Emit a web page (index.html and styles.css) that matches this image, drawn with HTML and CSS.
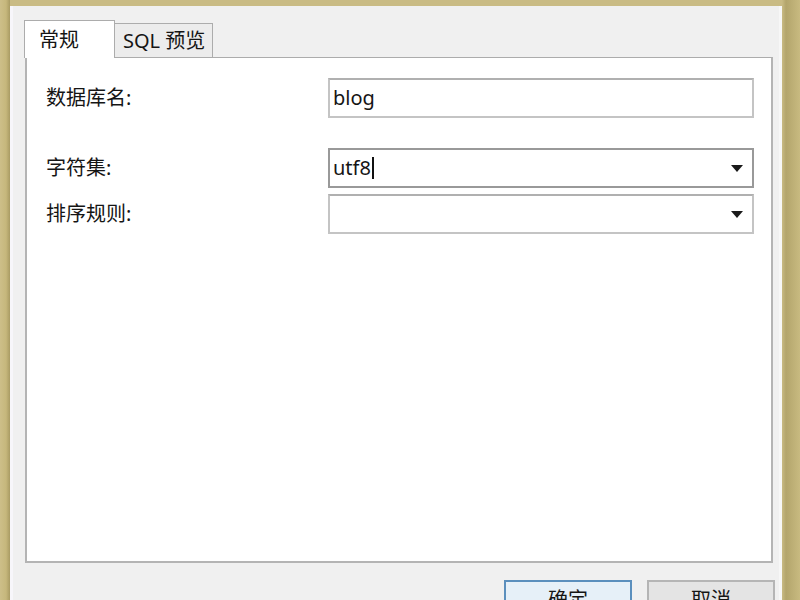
FILE: index.html
```html
<!DOCTYPE html>
<html lang="zh-CN">
<head>
<meta charset="utf-8">
<title>新建数据库</title>
<link rel="stylesheet" href="styles.css">
</head>
<body>
<div class="frame">
  <div class="dialog">
    <div class="tabs">
      <div class="tab tab-active">常规</div>
      <div class="tab">SQL 预览</div>
    </div>
    <div class="panel">
      <div class="form">
        <label class="label">数据库名:</label>
        <div class="field"><span class="value">blog</span></div>
        <label class="label">字符集:</label>
        <div class="field combo combo-focus">
          <span class="value">utf8<span class="caret"></span></span>
          <svg class="arrow" width="12" height="7" viewBox="0 0 12 7"><path d="M0 0H12L6 7Z" fill="#1a1a1a"/></svg>
        </div>
        <label class="label">排序规则:</label>
        <div class="field combo">
          <span class="value"></span>
          <svg class="arrow" width="12" height="7" viewBox="0 0 12 7"><path d="M0 0H12L6 7Z" fill="#1a1a1a"/></svg>
        </div>
      </div>
    </div>
    <div class="buttons">
      <button class="btn btn-default">确定</button>
      <button class="btn">取消</button>
    </div>
  </div>
</div>
</body>
</html>
```

FILE: styles.css
```css
html, body {
  margin: 0;
  padding: 0;
  width: 800px;
  height: 600px;
  overflow: hidden;
}

body {
  background: #c7b87e;
  font-family: "Noto Sans", "Noto Sans CJK SC", sans-serif;
  color: #151515;
}

.frame {
  height: 600px;
  padding: 6px 18px 0 10px;
  box-sizing: border-box;
  background: linear-gradient(to right, #cdbf89 0, #c6b77c 6px, #a99b63 10px, #c9bb84 10px, #c9bb84 782px, #b3a56c 786px, #c8ba80 800px);
  overflow: hidden;
}

.dialog {
  height: 100%;
  box-sizing: border-box;
  background: #f0f0f0;
  border-left: 3px solid #f7f6fa;
  border-right: 3px solid #f7f7f7;
  padding: 14px 6px 0 12px;
  display: flex;
  flex-direction: column;
  overflow: hidden;
}

.tabs {
  display: flex;
  align-items: flex-end;
  height: 37px;
  flex: none;
  margin-left: -1px;
  position: relative;
  z-index: 1;
}

.tab {
  flex: none;
  height: 34px;
  box-sizing: border-box;
  padding: 0 8px;
  width: 98px;
  border: 1px solid #acacac;
  border-bottom: none;
  border-left: none;
  background: #ececec;
  font-size: 20px;
  line-height: 34px;
  white-space: nowrap;
}

.tab-active {
  height: 38px;
  width: 91px;
  padding-left: 14px;
  margin-bottom: -1px;
  border-left: 1px solid #acacac;
  background: #ffffff;
  line-height: 38px;
}

.panel {
  flex: none;
  height: 506px;
  box-sizing: border-box;
  background: #ffffff;
  border: 2px solid #b4b4b4;
  border-top-width: 1px;
  border-top-color: #acacac;
  padding: 20px 16px 0 19px;
}

.form {
  display: grid;
  grid-template-columns: 282px 426px;
  grid-template-rows: 40px 70px 46px;
  align-items: end;
}

.label {
  font-size: 20px;
  line-height: 40px;
  height: 40px;
}

.field {
  height: 40px;
  box-sizing: border-box;
  border: 2px solid #c4c4c4;
  border-top-color: #b0b0b0;
  background: #fff;
  display: flex;
  align-items: center;
  padding: 0 3px;
  font-size: 20px;
}

.value {
  flex: 1;
  display: flex;
  align-items: center;
  line-height: 36px;
}

.combo-focus {
  border-color: #999999;
}

.caret {
  display: inline-block;
  width: 2px;
  height: 22px;
  background: #111;
  margin-left: 1px;
}

.arrow {
  margin-right: 6px;
  flex: none;
}

.buttons {
  flex: none;
  display: flex;
  justify-content: flex-end;
  gap: 15px;
  margin-top: 17px;
  margin-right: -2px;
}

.btn {
  width: 128px;
  height: 40px;
  box-sizing: border-box;
  border: 2px solid #b5b5b5;
  background: #e4e4e4;
  font-family: "Noto Sans", "Noto Sans CJK SC", sans-serif;
  font-size: 20px;
  color: #151515;
  padding: 0;
  line-height: 36px;
}

.btn-default {
  border-color: #5b8fbd;
  background: #e6f0f8;
}
```
